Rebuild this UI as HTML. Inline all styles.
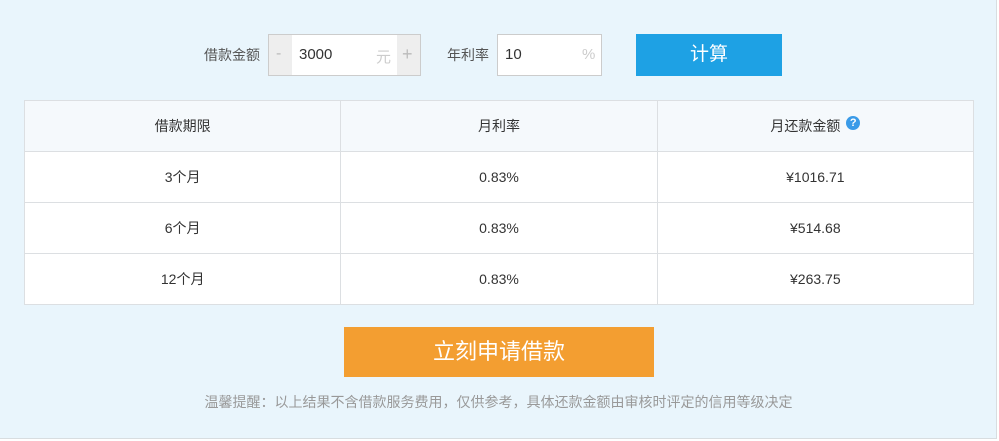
<!DOCTYPE html>
<html><head><meta charset="utf-8"><style>
*{margin:0;padding:0;box-sizing:border-box}
body{width:999px;height:441px;background:#fff;font-family:"Liberation Sans","Noto Sans CJK SC",sans-serif;position:relative;overflow:hidden}
.bg{position:absolute;left:0;top:0;width:997px;height:439px;background:#e9f5fc;border-right:1px solid #d8dde0;border-bottom:1px solid #d8dde0}
.a{position:absolute}
.lbl{font-size:14px;color:#555;top:46px;line-height:18px}
.box{border:1px solid #ccc;background:#fff;height:42px;top:34px}
.tbl{position:absolute;left:24px;top:100px;width:950px;border-collapse:collapse;background:#fff}
.tbl td{border:1px solid #dcdfe2;height:51px;text-align:center;font-size:14px;color:#333;width:316px}
.tbl tr:first-child td{background:#f5f9fc;height:51px}
</style></head><body>
<div class="bg"></div>
<div class="a lbl" style="left:204px">借款金额</div>
<div class="a box" style="left:268px;width:153px;background:#eeeeee"></div>
<div class="a" style="left:292px;top:35px;width:105px;height:40px;background:#fff"></div>
<div class="a" style="left:276px;top:45px;font-size:16px;color:#bbb">-</div>
<div class="a" style="left:402px;top:44px;font-size:18px;color:#bbb">+</div>
<div class="a" style="left:299px;top:46px;font-size:15px;color:#333">3000</div>
<div class="a" style="left:376px;top:46px;font-size:15px;color:#ccc">元</div>
<div class="a lbl" style="left:447px">年利率</div>
<div class="a box" style="left:497px;width:105px"></div>
<div class="a" style="left:505px;top:46px;font-size:15px;color:#333">10</div>
<div class="a" style="left:582px;top:46px;font-size:15px;color:#ccc">%</div>
<div class="a" style="left:636px;top:34px;width:146px;height:42px;background:#1ea1e4;color:#fff;font-size:19px;text-align:center;line-height:42px">计算</div>
<table class="tbl">
<tr><td>借款期限</td><td>月利率</td><td>月还款金额 <span style="display:inline-block;width:14px;height:14px;border-radius:50%;background:#3a9be8;color:#fff;font-size:11px;line-height:14px;font-weight:bold;vertical-align:5px;margin-left:2px">?</span></td></tr>
<tr><td>3个月</td><td>0.83%</td><td>¥1016.71</td></tr>
<tr><td>6个月</td><td>0.83%</td><td>¥514.68</td></tr>
<tr><td>12个月</td><td>0.83%</td><td>¥263.75</td></tr>
</table>
<div class="a" style="left:344px;top:327px;width:310px;height:50px;background:#f39e31;color:#fff;font-size:22px;text-align:center;line-height:50px">立刻申请借款</div>
<div class="a" style="left:0;width:997px;top:392px;text-align:center;font-size:14px;color:#999">温馨提醒：以上结果不含借款服务费用，仅供参考，具体还款金额由审核时评定的信用等级决定</div>
</body></html>
